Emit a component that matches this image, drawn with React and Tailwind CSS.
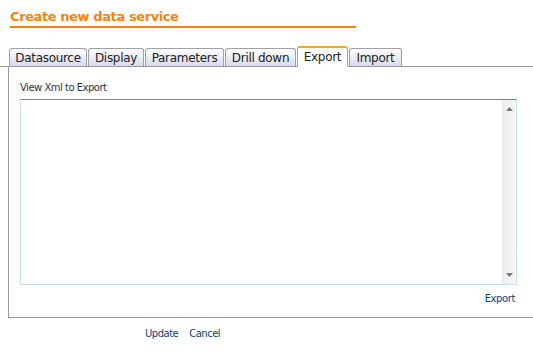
import { useState } from 'react'

const TABS = [
  { label: 'Datasource', w: 'w-[78px]' },
  { label: 'Display', w: 'w-[56px]' },
  { label: 'Parameters', w: 'w-[79px]' },
  { label: 'Drill down', w: 'w-[71px]' },
  { label: 'Export', w: 'w-[51px]' },
  { label: 'Import', w: 'w-[53px]' },
]

export default function App() {
  const [tab, setTab] = useState('Export')

  return (
    <div className="w-[533px] h-[360px] bg-white font-['DejaVu_Sans',sans-serif] overflow-hidden">
      {/* Title */}
      <div className="pl-[10px] pt-[9px]">
        <h1 className="text-[13px] leading-[16px] font-bold text-[#f7830f] tracking-[-0.4px]">Create new data service</h1>
        <div className="w-[346px] h-[2px] bg-[#f7830f] mt-[1px]" />
      </div>

      {/* Tabs */}
      <div className="flex items-end gap-[1px] pl-[9px] mt-[18px] h-[21px] border-b border-[#999999]">
        {TABS.map(t => (
          <button
            key={t.label}
            onClick={() => setTab(t.label)}
            className={`${t.w} flex items-center justify-center text-[12px] tracking-[-0.3px] text-[#222] rounded-t-[3px] border border-[#a0a0a8] ${
              tab === t.label
                ? 'h-[21px] -mb-px bg-white border-t-2 border-t-[#f5a81c] border-b-white'
                : 'h-[18px] border-b-0 bg-gradient-to-b from-white to-[#d9d9ec]'
            }`}
          >
            {t.label}
          </button>
        ))}
      </div>

      {/* Panel */}
      <div className="ml-[8px] h-[251px] border-l border-b border-[#999999] pl-[11px] pt-[15px]">
        <div className="text-[10px] leading-[12px] tracking-[-0.5px] text-[#333]">View Xml to Export</div>
        <div className="mt-[5px] w-[497px] h-[186px] flex border border-[#c5e3f2] border-t-[#5c8fb8]">
          <div className="flex-1" />
          <div className="w-[14px] flex flex-col justify-between items-center bg-gradient-to-r from-[#ececec] to-[#f6f6f6] py-[7px]">
            <svg width="7" height="4" viewBox="0 0 7 4"><path d="M3.5 0 L7 4 L0 4 Z" fill="#777" /></svg>
            <svg width="7" height="4" viewBox="0 0 7 4"><path d="M0 0 L7 0 L3.5 4 Z" fill="#777" /></svg>
          </div>
        </div>
        <div className="w-[495px] flex justify-end mt-[8px]">
          <a className="text-[10px] leading-[12px] tracking-[-0.4px] text-[#0d3f7a] cursor-pointer">Export</a>
        </div>
      </div>

      {/* Footer */}
      <div className="flex gap-[11px] pl-[145px] mt-[10px] text-[10px] leading-[12px] tracking-[-0.5px] text-[#0d3f7a]">
        <a className="cursor-pointer">Update</a>
        <a className="cursor-pointer">Cancel</a>
      </div>
    </div>
  )
}
